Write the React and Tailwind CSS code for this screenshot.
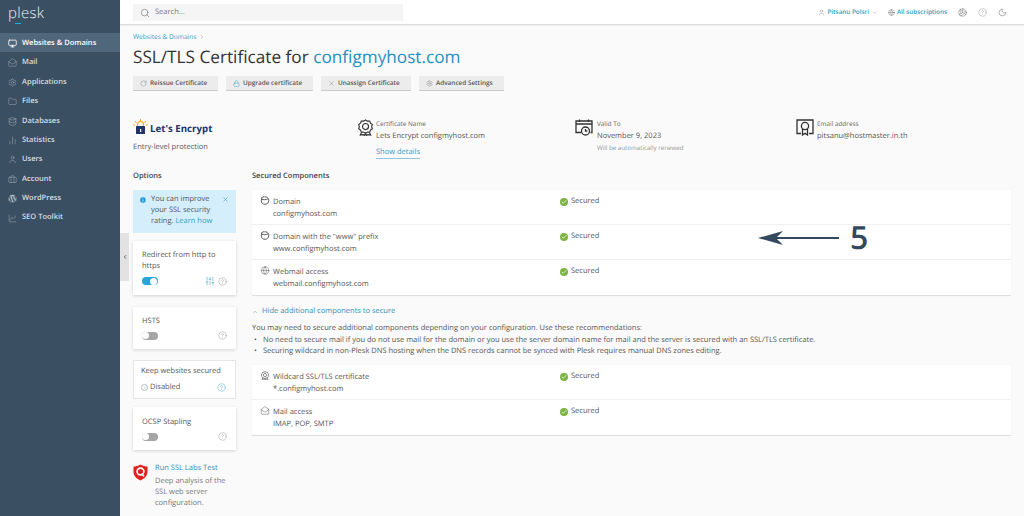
import {
  Monitor, MailOpen, Settings, Folder, Database, BarChart2, User, Briefcase, ChartSpline,
  Search, ChevronRight, ChevronLeft, ChevronDown, ChevronUp, Globe, CircleHelp, Moon,
  RotateCw, Lock, X, Info, SlidersVertical, Check, Volleyball,
} from "lucide-react"
import { FaWordpress } from "react-icons/fa"

const navItems = [
  ["Websites & Domains", Monitor],
  ["Mail", MailOpen],
  ["Applications", Settings],
  ["Files", Folder],
  ["Databases", Database],
  ["Statistics", BarChart2],
  ["Users", User],
  ["Account", Briefcase],
  ["WordPress", FaWordpress],
  ["SEO Toolkit", ChartSpline],
]

function Sidebar() {
  return (
    <aside className="w-[120px] shrink-0 bg-[#3b4f62] text-[#d5dde3]">
      <div className="h-[33px] pl-[8px] pt-[2px] text-[15px] font-light leading-[22px] tracking-[0.3px] text-[#eef1f4]">
        <span className="relative">
          plesk
          <span className="absolute left-[7px] top-[20px] h-px w-[6px] bg-[#28aade]" />
        </span>
      </div>
      {navItems.map(([label, Icon], i) => (
        <div
          key={label}
          className={
            i === 0
              ? "flex h-[19.3px] items-center gap-[5px] bg-[#50677b] pl-[8px] pt-[2px] text-[7.5px] font-semibold text-white"
              : "flex h-[19.4px] items-center gap-[5px] pl-[8px] pt-[2px] text-[7.5px] font-semibold text-[#d5dde3]"
          }
        >
          <Icon size={9} strokeWidth={i === 0 ? 2.2 : 1.2} className={i === 0 ? "text-white" : "text-[#a9b8c4]"} />
          <span>{label}</span>
        </div>
      ))}
    </aside>
  )
}

function TopBar() {
  return (
    <header className="flex h-[25px] shrink-0 items-center border-b border-[#dcdcdc] bg-white pl-[13px] shadow-[0_1px_1px_rgba(0,0,0,0.04)]">
      <div className="flex h-[17px] w-[270px] items-center gap-[5px] bg-[#f5f5f5] pl-[7px] pt-px text-[7.5px] text-[#777]">
        <Search size={10} strokeWidth={1.5} className="text-[#777]" />
        Search...
      </div>
      <div className="ml-auto flex items-center pr-[17px] text-[6.3px] font-semibold text-[#2f9ec6]">
        <User size={7} strokeWidth={1.4} className="mr-[2px] text-[#888]" />
        Pitsanu Polsri
        <ChevronDown size={5} className="ml-[3px] text-[#888]" />
        <Globe size={7} strokeWidth={1.4} className="ml-[11px] mr-[2px] text-[#666]" />
        All subscriptions
        <Volleyball size={9} strokeWidth={1.2} className="ml-[11px] text-[#666]" />
        <CircleHelp size={9} strokeWidth={1.1} className="ml-[11px] text-[#888]" />
        <Moon size={9} strokeWidth={1.3} className="ml-[11px] text-[#666]" />
      </div>
    </header>
  )
}

function ToolButton({ icon: Icon, iconClass, width, children }) {
  return (
    <div
      className="flex h-[15px] items-center gap-[3px] border-b border-[#c9c9c9] bg-[#ececec] pl-[7px] text-[6.4px] font-semibold text-[#555]"
      style={{ width }}
    >
      <Icon size={7} strokeWidth={1.5} className={iconClass} />
      {children}
    </div>
  )
}

function Meta({ icon, iconWidth, label, value, sub, link, className }) {
  return (
    <div className={`flex ${className}`}>
      <div className="shrink-0 text-[#333]" style={{ width: iconWidth }}>{icon}</div>
      <div>
        <div className="text-[6.4px] leading-[10px] text-[#666]">{label}</div>
        <div className="mt-px text-[7.5px] leading-[12px] text-[#555]">{value}</div>
        {sub && <div className="mt-px text-[6.2px] leading-[10px] text-[#999]">{sub}</div>}
        {link && <div className="mt-[5px] w-fit border-b border-[#8fc7dd] text-[7.5px] leading-[11px] text-[#2f9ec6]">{link}</div>}
      </div>
    </div>
  )
}

function Toggle({ on }) {
  return on ? (
    <div className="flex h-[8px] w-[16px] items-center justify-end rounded-full bg-[#28a4d9] pr-px">
      <div className="h-[7px] w-[7px] rounded-full bg-white" />
    </div>
  ) : (
    <div className="flex h-[8px] w-[16px] items-center rounded-full bg-[#a5a5a5]">
      <div className="h-[7px] w-[7px] rounded-full bg-white" />
    </div>
  )
}

function OptionCard({ title, on, extra, className }) {
  return (
    <div className={`bg-white px-[9px] shadow-[0_1px_3px_rgba(0,0,0,0.16)] ${className}`}>
      <div className="text-[7.5px] leading-[11px] text-[#555]">{title}</div>
      <div className="mt-[4px] flex items-center">
        <Toggle on={on} />
        <div className="ml-auto flex items-center gap-[2px]">
          {extra}
          <CircleHelp size={9} strokeWidth={1.1} className="text-[#888]" />
        </div>
      </div>
    </div>
  )
}

function OptionsColumn() {
  return (
    <div className="w-[103px] shrink-0">
      <div className="text-[7.5px] font-semibold leading-[11px] text-[#444]">Options</div>
      <div className="mt-[8px] flex h-[43px] gap-[4px] bg-[#d4effb] pl-[6px] pr-[7px] pt-[4px] text-[7.5px] leading-[11px] text-[#555]">
        <Info size={8} fill="#1f9ad6" stroke="#fff" strokeWidth={2} className="mt-[2px] shrink-0" />
        <div className="flex-1">
          You can improve your SSL security rating. <span className="text-[#2f9ec6]">Learn how</span>
        </div>
        <X size={7} className="mt-[2px] shrink-0 text-[#3aa4d0]" />
      </div>
      <OptionCard
        title="Redirect from http to https"
        on
        className="mt-[8px] h-[54px] pt-[9px]"
        extra={<SlidersVertical size={10} strokeWidth={1.3} className="mr-px text-[#2f9ec6]" />}
      />
      <OptionCard title="HSTS" className="mt-[12px] h-[42px] pt-[9px]" />
      <div className="mt-[11px] h-[39px] border border-[#e6e6e6] bg-white pl-[7px] pr-[9px] pt-[5px]">
        <div className="text-[7.5px] leading-[11px] text-[#555]">Keep websites secured</div>
        <div className="mt-[5px] flex items-center gap-[2px] text-[7.5px] leading-[11px] text-[#555]">
          <div className="flex h-[7px] w-[7px] items-center justify-center rounded-full border border-[#bbb]">
            <X size={4} className="text-[#aaa]" />
          </div>
          Disabled
          <CircleHelp size={9} strokeWidth={1.1} className="ml-auto text-[#2f9ec6]" />
        </div>
      </div>
      <OptionCard title="OCSP Stapling" className="mt-[8px] h-[43px] pt-[10px]" />
      <div className="mt-[13px] flex gap-[7px]">
        <svg width="15" height="17" viewBox="0 0 15 17" className="mt-px shrink-0">
          <path d="M7.5 0.5 C10 2 12 2.5 14.5 2.5 V8 C14.5 12 11 15 7.5 16.5 C4 15 0.5 12 0.5 8 V2.5 C3 2.5 5 2 7.5 0.5 Z" fill="#e0201b" />
          <circle cx="7.5" cy="7.5" r="3.4" fill="none" stroke="#fff" strokeWidth="1.6" />
          <path d="M8.5 9.5 L11 12.5" stroke="#fff" strokeWidth="1.6" />
        </svg>
        <div>
          <div className="text-[7.5px] leading-[11px] text-[#2f8fb8]">Run SSL Labs Test</div>
          <div className="mt-[2px] text-[7.5px] leading-[11px] text-[#777]">
            Deep analysis of the SSL web server configuration.
          </div>
        </div>
      </div>
    </div>
  )
}

function RosetteIcon({ size, strokeWidth, className }) {
  return (
    <svg width={size} height={size} viewBox="0 0 18 18" fill="none" stroke="currentColor" strokeWidth={strokeWidth} className={className}>
      <path d="M9 1 L11 2.3 L13.4 2.2 L14.3 4.4 L16.2 5.8 L15.5 8.1 L16.2 10.4 L14.3 11.8 L13.4 14 L11 13.9 L9 15.2 L7 13.9 L4.6 14 L3.7 11.8 L1.8 10.4 L2.5 8.1 L1.8 5.8 L3.7 4.4 L4.6 2.2 L7 2.3 Z" />
      <circle cx="9" cy="8" r="3.2" />
      <path d="M5 14 L3.5 17 L6.5 16.5 L8 17.5 L9 15.2 L10 17.5 L11.5 16.5 L14.5 17 L13 14" />
    </svg>
  )
}

function DomainIcon({ size, strokeWidth, className }) {
  return (
    <svg width={size} height={size} viewBox="0 0 12 12" fill="none" stroke="currentColor" strokeWidth={strokeWidth} className={className}>
      <path d="M1.5 4 V2.5 C1.5 1.5 2.5 1.3 3 2 C3.2 0.8 4.5 0.5 5 1.5 C5.5 0.5 7 0.6 7.2 1.7 C7.8 1 9 1.3 9 2.2 C10 2.5 11 3.5 11 6 C11 9 8.8 11 6 11 C3 11 1 9 1 6.5 Z" />
      <path d="M1.5 4.2 C4 5.2 7 5.2 10.2 3.8" />
    </svg>
  )
}

function CertFrameIcon() {
  return (
    <svg width="18" height="17" viewBox="0 0 18 17" fill="none" stroke="currentColor" strokeWidth="1.3">
      <path d="M5 14.5 H1 V1 H17 V14.5 H13" />
      <circle cx="9" cy="7" r="3.6" />
      <path d="M6.5 10 V16 L9 14.2 L11.5 16 V10" />
    </svg>
  )
}

function CalendarIcon() {
  return (
    <svg width="18" height="17" viewBox="0 0 18 17" fill="none" stroke="currentColor" strokeWidth="1.3">
      <path d="M6 13.5 H1 V2 H17 V13.5 H15.5" />
      <path d="M1 5 H17 M4.5 0.5 V3 M13.5 0.5 V3" />
      <circle cx="10.5" cy="12" r="4" fill="#fafafa" />
      <path d="M10.5 10 V12 H12.3" />
    </svg>
  )
}

function ComponentRow({ icon: Icon, iconSize = 9, title, value, last }) {
  return (
    <div className={`flex h-[35px] bg-white pl-[8px] pt-[6px] ${last ? "" : "border-b border-[#f0f0f0]"}`}>
      <Icon size={iconSize} strokeWidth={1.3} className="w-[10px] shrink-0 text-[#555]" />
      <div className="ml-[3px] w-[287px] shrink-0 text-[7.5px] leading-[12px] text-[#555]">
        <div>{title}</div>
        <div>{value}</div>
      </div>
      <div className="flex h-[12px] items-center gap-[3px] text-[7.5px] text-[#555]">
        <div className="flex h-[8px] w-[8px] items-center justify-center rounded-full bg-[#7cb342]">
          <Check size={6} strokeWidth={3} className="text-white" />
        </div>
        Secured
      </div>
    </div>
  )
}

function ComponentsColumn() {
  return (
    <div className="min-w-0 flex-1">
      <div className="text-[7.5px] font-semibold leading-[11px] text-[#444]">Secured Components</div>
      <div className="mt-[8px] border-b border-[#dedede] shadow-[0_0_1px_rgba(0,0,0,0.08)]">
        <ComponentRow icon={DomainIcon} title="Domain" value="configmyhost.com" />
        <ComponentRow icon={DomainIcon} title={'Domain with the "www" prefix'} value="www.configmyhost.com" />
        <ComponentRow icon={Globe} title="Webmail access" value="webmail.configmyhost.com" last />
      </div>
      <div className="mt-[10px] flex items-center gap-[4px] text-[7.5px] leading-[11px] text-[#2f8fb8]">
        <ChevronUp size={6} className="text-[#888]" />
        Hide additional components to secure
      </div>
      <div className="mt-[6px] text-[7.5px] leading-[11.5px] text-[#555]">
        <div>You may need to secure additional components depending on your configuration. Use these recommendations:</div>
        <div className="flex">
          <span className="w-[11px] pl-[2px]">•</span>
          No need to secure mail if you do not use mail for the domain or you use the server domain name for mail and the server is secured with an SSL/TLS certificate.
        </div>
        <div className="flex">
          <span className="w-[11px] pl-[2px]">•</span>
          Securing wildcard in non-Plesk DNS hosting when the DNS records cannot be synced with Plesk requires manual DNS zones editing.
        </div>
      </div>
      <div className="mt-[7px] border-b border-[#dedede] shadow-[0_0_1px_rgba(0,0,0,0.08)]">
        <ComponentRow icon={RosetteIcon} title="Wildcard SSL/TLS certificate" value="*.configmyhost.com" />
        <ComponentRow icon={MailOpen} title="Mail access" value="IMAP, POP, SMTP" last />
      </div>
    </div>
  )
}

export default function App() {
  return (
    <div className="relative flex h-[516px] w-[1024px] overflow-hidden bg-[#fafafa] font-['Open_Sans',sans-serif] [text-rendering:geometricPrecision]">
      <Sidebar />
      <div className="relative flex min-w-0 flex-1 flex-col">
        <TopBar />
        <div className="absolute left-0 top-[233px] flex h-[48px] w-[9px] items-center justify-center bg-[#e2e2e2]">
          <ChevronLeft size={6} strokeWidth={3} className="text-[#444]" />
        </div>
        <main className="pl-[13px] pr-[13px]">
          <div className="mt-[7px] flex items-center gap-[3px] text-[6.6px] leading-[10px] text-[#2f9ec6]">
            Websites &amp; Domains <ChevronRight size={6} className="text-[#888]" />
          </div>
          <h1 className="mt-[4px] text-[17.2px] font-normal leading-[24px] text-[#333]">
            SSL/TLS Certificate for <span className="text-[#1f8fc0]">configmyhost.com</span>
          </h1>
          <div className="mt-[6px] flex gap-[8px]">
            <ToolButton icon={RotateCw} iconClass="text-[#888]" width="85px">Reissue Certificate</ToolButton>
            <ToolButton icon={Lock} iconClass="text-[#3a9ed0]" width="87px">Upgrade certificate</ToolButton>
            <ToolButton icon={X} iconClass="text-[#888]" width="90px">Unassign Certificate</ToolButton>
            <ToolButton icon={Settings} iconClass="text-[#888]" width="85px">Advanced Settings</ToolButton>
          </div>
          <div className="mt-[28px] flex h-[52px]">
            <div className="w-[224px] shrink-0">
              <div className="flex h-[16px] items-end gap-[2px]">
                <svg width="15" height="16" viewBox="0 0 15 16" className="mt-[-1px]">
                  <path d="M7.5 0 V2 M2 2 L3.5 4 M13 2 L11.5 4 M0 6 H2 M13 6 H15" stroke="#f6a81c" strokeWidth="1" />
                  <path d="M4.5 7 V5.5 A3 3 0 0 1 10.5 5.5 V7" fill="none" stroke="#f6a81c" strokeWidth="1.2" />
                  <rect x="3" y="7" width="9" height="8" fill="#23346b" rx="0.5" />
                  <rect x="7" y="10" width="1.2" height="3" fill="#fff" />
                </svg>
                <span className="text-[9.7px] font-bold leading-[13px] text-[#23346b]">Let's Encrypt</span>
              </div>
              <div className="mt-[7px] text-[7.5px] leading-[11px] text-[#555]">Entry-level protection</div>
            </div>
            <Meta
              className="w-[218px] shrink-0"
              iconWidth="19px"
              icon={<RosetteIcon size={17} strokeWidth={1.2} />}
              label="Certificate Name"
              value="Lets Encrypt configmyhost.com"
              link="Show details"
            />
            <Meta
              className="w-[221px] shrink-0"
              iconWidth="22px"
              icon={<CalendarIcon />}
              label="Valid To"
              value="November 9, 2023"
              sub="Will be automatically renewed"
            />
            <Meta
              iconWidth="21px"
              icon={<CertFrameIcon />}
              label="Email address"
              value="pitsanu@hostmaster.in.th"
            />
          </div>
          <div className="flex gap-[16px]">
            <OptionsColumn />
            <ComponentsColumn />
          </div>
        </main>
      </div>

      {/* annotation drawn over the page */}
      <div className="absolute left-[758px] top-[222px] flex items-center gap-[10px]">
        <svg width="82" height="16" viewBox="0 0 82 16">
          <path d="M81 8 H16" stroke="#34495e" strokeWidth="2" />
          <path d="M0 8 L25 1 L18 8 L25 15 Z" fill="#34495e" />
        </svg>
        <span className="text-[32px] font-semibold leading-[32px] text-[#34495e]">5</span>
      </div>
    </div>
  )
}
